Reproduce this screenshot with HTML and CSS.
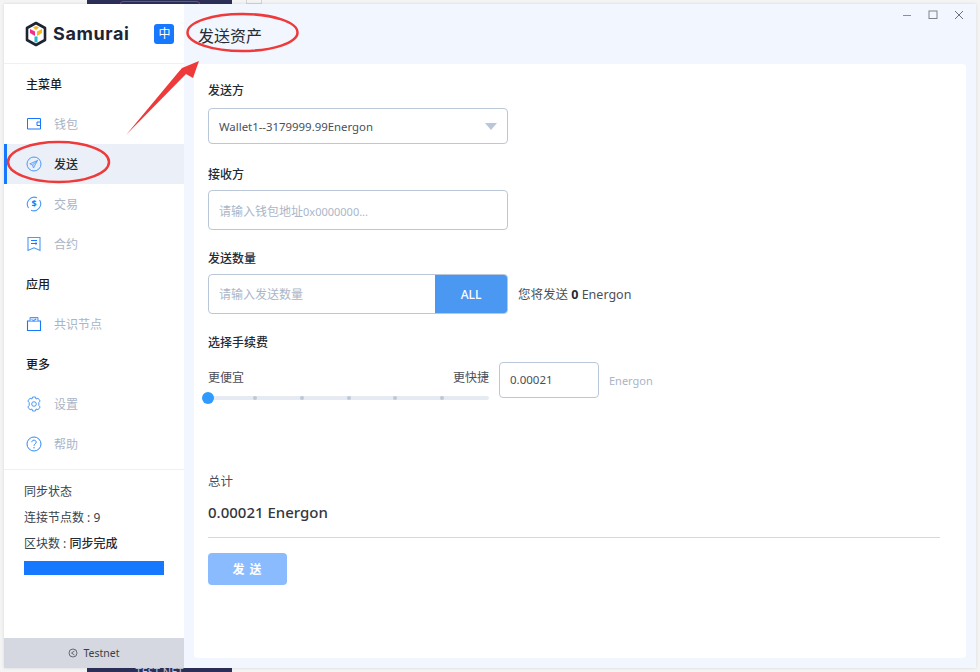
FILE: index.html
```html
<!DOCTYPE html>
<html lang="en">

<head>
    <meta charset="UTF-8">
    <meta name="viewport" content="width=device-width, initial-scale=1.0">
    <title>Samurai</title>
    <link rel="stylesheet" href="styles.css">
</head>

<body>

    <!-- bits of the desktop behind the window -->
    <div class="desk-strip desk-top"><span class="desk-tab"></span></div>
    <div class="desk-box"></div>
    <div class="desk-strip desk-bottom">TEST NET</div>

    <div class="window">
        <aside class="sidebar">
            <div class="brand">
                <svg class="logo" width="22" height="26" viewBox="0 0 22 26">
                    <path d="M11 2 L20 7 V19 L11 24 L2 19 V7 Z" fill="none" stroke="#1f2433" stroke-width="2.6" stroke-linejoin="round"/>
                    <path d="M5 8 L10 10.500 V15 L5 12 Z" fill="#f0308c"/>
                    <path d="M17 8 L12 10.500 V15 L17 12 Z" fill="#f7b818"/>
                    <path d="M8 6.500 L11 5 L14 6.500 L11 9 Z" fill="#f7b818"/>
                    <path d="M9.500 15.500 H12.500 V21 L11 21.500 L9.500 21 Z" fill="#22b8d6"/>
                </svg>
                <span class="brand-name">Samurai</span>
                <span class="lang">中</span>
            </div>

            <div class="menu-title">主菜单</div>
            <a class="menu-item">
                <svg class="icon" viewBox="0 0 16 16"><path d="M1.500 2.500 H14.500 V13 H1.500 Z M14.500 6 H11 V9.500 H14.500" fill="none" stroke="#1677ff" stroke-width="1"/></svg>
                钱包
            </a>
            <a class="menu-item active">
                <svg class="icon" viewBox="0 0 16 16"><circle cx="8" cy="8" r="7" fill="none" stroke="#4a98f7" stroke-width="1"/><path d="M11.500 4.500 L3.800 7.800 L6.500 9 L7.500 12 Z M6.500 9 L11.500 4.500" fill="#cfe2fc" stroke="#4a98f7" stroke-width="0.800" stroke-linejoin="round"/></svg>
                发送
            </a>
            <a class="menu-item">
                <svg class="icon" viewBox="0 0 16 16"><path d="M2.500 12 A7 7 0 0 1 11 1.700 M13.500 4 A7 7 0 0 1 5 14.300" fill="none" stroke="#4a98f7" stroke-width="1.100"/><text x="8" y="11" class="dollar">$</text></svg>
                交易
            </a>
            <a class="menu-item">
                <svg class="icon" viewBox="0 0 16 16"><path d="M2 1.500 H14 V14.500 L8 11.800 L2 14.500 Z" fill="none" stroke="#4a98f7" stroke-width="1.100"/><path d="M5 4.500 H11 M5 7.500 H11 M9.500 6.300 L11 7.500 L9.500 8.700" fill="none" stroke="#1677ff" stroke-width="1"/></svg>
                合约
            </a>

            <div class="menu-title">应用</div>
            <a class="menu-item">
                <svg class="icon" viewBox="0 0 16 16"><path d="M1.500 5 H14.500 V14.500 H1.500 Z" fill="none" stroke="#1677ff" stroke-width="1.100"/><path d="M4 5 V1.500 H12 V5" fill="#cfe2fc" stroke="#4a98f7" stroke-width="1"/><path d="M6 3.500 L7.500 5 L10 2.800" fill="none" stroke="#1677ff" stroke-width="1"/></svg>
                共识节点
            </a>

            <div class="menu-title">更多</div>
            <a class="menu-item">
                <svg class="icon" viewBox="0 0 16 16"><path d="M6.500 1 H9.500 L10 3 L12 2.200 L14.200 5 L12.800 6.500 V9.500 L14.200 11 L12 13.800 L10 13 L9.500 15 H6.500 L6 13 L4 13.800 L1.800 11 L3.200 9.500 V6.500 L1.800 5 L4 2.200 L6 3 Z" fill="none" stroke="#4a98f7" stroke-width="1" stroke-linejoin="round"/><circle cx="8" cy="8" r="2.300" fill="none" stroke="#4a98f7" stroke-width="1"/></svg>
                设置
            </a>
            <a class="menu-item">
                <svg class="icon" viewBox="0 0 16 16"><circle cx="8" cy="8" r="7" fill="none" stroke="#2f88f5" stroke-width="1"/><path d="M5.800 6.200 C5.800 3.500 10.200 3.500 10.200 6.200 C10.200 7.800 8 7.800 8 9.800" fill="none" stroke="#2f88f5" stroke-width="1"/><circle cx="8" cy="11.800" r="0.700" fill="#2f88f5"/></svg>
                帮助
            </a>

            <div class="sync">
                <p>同步状态</p>
                <p>连接节点数 : 9</p>
                <p>区块数 : <span class="sync-done">同步完成</span></p>
                <div class="sync-bar"></div>
            </div>

            <div class="network">
                <svg width="10" height="10" viewBox="0 0 10 10"><circle cx="5" cy="5" r="4" fill="none" stroke="#4a4f5a" stroke-width="0.800"/><path d="M6.500 3 L3.500 5 L6.500 7" fill="none" stroke="#4a4f5a" stroke-width="0.800"/></svg>
                Testnet
            </div>
        </aside>

        <main class="content">
            <header class="topbar">
                <h1>发送资产</h1>
                <div class="win-controls">
                    <svg width="10" height="10" viewBox="0 0 10 10"><path d="M1 5.500 H9" stroke="#8a8f99" stroke-width="1"/></svg>
                    <svg width="10" height="10" viewBox="0 0 10 10"><rect x="1" y="1" width="8" height="7.500" fill="none" stroke="#7d828c" stroke-width="1"/></svg>
                    <svg width="10" height="10" viewBox="0 0 10 10"><path d="M1 1 L9 9 M9 1 L1 9" stroke="#6d727c" stroke-width="1"/></svg>
                </div>
            </header>

            <form class="card">
                <label class="field-label">发送方</label>
                <div class="select">
                    Wallet1--3179999.99Energon
                    <span class="caret"></span>
                </div>

                <label class="field-label label-to">接收方</label>
                <div class="input input-to">请输入钱包地址<span class="hint-latin">0x0000000...</span></div>

                <label class="field-label label-next">发送数量</label>
                <div class="amount-row">
                    <div class="amount-group">
                        <div class="amount-input">请输入发送数量</div>
                        <button type="button" class="all-btn">ALL</button>
                    </div>
                    <span class="amount-note">您将发送 <b>0</b> Energon</span>
                </div>

                <label class="field-label label-next">选择手续费</label>
                <div class="fee-row">
                    <div class="fee-slider">
                        <div class="fee-ends"><span>更便宜</span><span>更快捷</span></div>
                        <div class="track">
                            <i class="dot"></i><i class="dot"></i><i class="dot"></i><i class="dot"></i><i class="dot"></i>
                            <span class="handle"></span>
                        </div>
                    </div>
                    <div class="fee-input">0.00021</div>
                    <span class="fee-unit">Energon</span>
                </div>

                <div class="total-label">总计</div>
                <div class="total-value">0.00021 Energon</div>
                <hr class="divider">
                <button type="button" class="send-btn">发 送</button>
            </form>
        </main>
    </div>

    <!-- red annotation marks drawn on top of the screenshot -->
    <svg class="marks" width="980" height="672" viewBox="0 0 980 672">
        <ellipse cx="242.500" cy="32.500" rx="55" ry="18.500" fill="none" stroke="#ee3a3a" stroke-width="2.500"/>
        <ellipse cx="58.500" cy="162" rx="50.500" ry="20" fill="none" stroke="#ee3a3a" stroke-width="2.500"/>
        <path d="M126 135 L176 75 L182 68 L199 61 L193 78 L186 74 Z" fill="#ee3a3a"/>
    </svg>

</body>

</html>
```

FILE: styles.css
```css
body {
    font-family: "Noto Sans", "Noto Sans CJK SC", sans-serif;
    font-size: 12px;
    margin: 0;
    padding: 4px;
    height: 664px;
    background-color: #f4f4f5;
    overflow: hidden;
}

/* desktop showing round the window */
.desk-strip {
    position: absolute;
    left: 87px;
    width: 145px;
    height: 4px;
    background-color: #2c3058;
    overflow: hidden;
}

.desk-top {
    top: 0;
}

.desk-tab {
    display: block;
    width: 78px;
    height: 6px;
    margin-left: 33px;
    margin-top: 1px;
    border: 1px solid #a03a86;
    border-radius: 3px;
}

.desk-box {
    position: absolute;
    top: 0;
    left: 246px;
    width: 14px;
    height: 3px;
    border: 1px solid #d5d5d8;
    border-top: none;
}

.desk-bottom {
    bottom: 0;
    color: #c5c9dc;
    text-align: center;
    line-height: 8px;
    font-size: 11px;
}

.window {
    position: relative;
    display: flex;
    width: 972px;
    height: 664px;
    background-color: #f2f6fe;
    box-shadow: 0 0 3px rgba(0, 0, 0, 0.12);
}

/* sidebar */
.sidebar {
    width: 180px;
    flex: none;
    display: flex;
    flex-direction: column;
    background-color: #ffffff;
}

.brand {
    display: flex;
    align-items: center;
    height: 59px;
    padding-left: 21px;
    border-bottom: 1px solid #eef0f5;
    box-sizing: content-box;
}

.brand-name {
    margin-left: 6px;
    font-family: "Inter", sans-serif;
    font-size: 18px;
    font-weight: 700;
    letter-spacing: 0.6px;
    color: #1f2433;
}

.lang {
    width: 20px;
    height: 20px;
    margin-left: 25px;
    border-radius: 3px;
    background-color: #1677ff;
    color: #ffffff;
    text-align: center;
    line-height: 20px;
}

.menu-title {
    height: 40px;
    padding-left: 22px;
    line-height: 42px;
    font-weight: 500;
    color: #1c1c1c;
}

.menu-item {
    display: flex;
    align-items: center;
    height: 40px;
    padding-left: 22px;
    color: #a9b4c6;
}

.menu-item.active {
    padding-left: 19px;
    border-left: 3px solid #1677ff;
    background-color: #ebf0f8;
    color: #262a33;
    font-weight: 500;
}

.icon {
    width: 16px;
    height: 16px;
    margin-right: 12px;
}

.dollar {
    font-size: 9px;
    font-weight: 700;
    fill: #1677ff;
    text-anchor: middle;
}

.sync {
    flex: 1;
    margin-top: 5px;
    padding: 9px 20px 0;
    border-top: 1px solid #eef0f5;
    color: #3b3f48;
}

.sync p {
    margin: 0;
    height: 26px;
    line-height: 26px;
}

.sync-done {
    font-weight: 500;
    color: #262a33;
}

.sync-bar {
    height: 14px;
    margin-top: 4px;
    background-color: #1677ff;
}

.network {
    display: flex;
    align-items: center;
    justify-content: center;
    gap: 5px;
    height: 30px;
    background-color: #d5d8e0;
    font-size: 10.500px;
    color: #3b3f48;
}

/* main area */
.content {
    flex: 1;
    display: flex;
    flex-direction: column;
}

.topbar {
    position: relative;
    height: 60px;
    padding-left: 14px;
}

h1 {
    margin: 0;
    font-size: 16px;
    font-weight: 400;
    line-height: 64px;
    color: #262a33;
}

.win-controls {
    position: absolute;
    top: 6px;
    right: 12px;
    display: flex;
    gap: 16px;
}

.card {
    display: flex;
    flex-direction: column;
    align-items: flex-start;
    width: 732px;
    height: 594px;
    padding: 0 26px 0 14px;
    margin-left: 10px;
    background-color: #ffffff;
    border-radius: 4px;
}

.field-label {
    height: 18px;
    margin-top: 18px;
    margin-bottom: 8px;
    line-height: 18px;
    font-weight: 500;
    color: #262a33;
}

.label-to {
    margin-top: 22px;
}

.label-next {
    margin-top: 20px;
}

.select,
.input {
    display: flex;
    align-items: center;
    width: 300px;
    box-sizing: border-box;
    padding-left: 10px;
    border: 1px solid #bac7d8;
    border-radius: 4px;
}

.select {
    position: relative;
    height: 36px;
    font-size: 11.400px;
    color: #4a4f5a;
}

.caret {
    position: absolute;
    right: 10px;
    top: 14px;
    border-left: 6px solid transparent;
    border-right: 6px solid transparent;
    border-top: 7px solid #bac7d8;
}

.input {
    height: 40px;
    padding-top: 2px;
    margin-top: -2px;
    color: #aab6c8;
}

.hint-latin {
    font-size: 11px;
}

.amount-row {
    display: flex;
    align-items: center;
    margin-top: -2px;
}

.amount-group {
    display: flex;
    width: 300px;
    height: 40px;
    box-sizing: border-box;
    border: 1px solid #bac7d8;
    border-radius: 4px;
    overflow: hidden;
}

.amount-input {
    flex: 1;
    padding-left: 10px;
    line-height: 40px;
    color: #aab6c8;
}

.all-btn {
    width: 72px;
    border: none;
    background-color: #4a98f2;
    color: #ffffff;
    font: inherit;
    font-weight: 500;
}

.amount-note {
    margin-left: 10px;
    padding-bottom: 2px;
    font-size: 12.500px;
    color: #4a4f5a;
}

.amount-note b {
    color: #262a33;
}

.fee-row {
    display: flex;
    align-items: flex-start;
    margin-top: 2px;
}

.fee-slider {
    width: 281px;
}

.fee-ends {
    display: flex;
    justify-content: space-between;
    height: 20px;
    line-height: 20px;
    margin-top: 6px;
    color: #4a4f5a;
}

.track {
    position: relative;
    display: flex;
    justify-content: space-between;
    align-items: center;
    height: 4px;
    margin-top: 8px;
    padding: 0 45px 0 45px;
    background-color: #e6eaf2;
    border-radius: 2px;
}

.dot {
    width: 4px;
    height: 4px;
    border-radius: 2px;
    background-color: #bfc8d6;
}

.handle {
    position: absolute;
    left: -6px;
    top: -4px;
    width: 12px;
    height: 12px;
    border-radius: 50%;
    background-color: #2f9bff;
}

.fee-input {
    width: 100px;
    height: 36px;
    box-sizing: border-box;
    margin-left: 10px;
    padding-left: 10px;
    border: 1px solid #bac7d8;
    border-radius: 4px;
    line-height: 34px;
    font-size: 11.500px;
    color: #4a4f5a;
}

.fee-unit {
    align-self: center;
    margin-left: 10px;
    padding-bottom: 2px;
    font-size: 11px;
    color: #a9b4c6;
}

.total-label {
    margin-top: 73px;
    font-size: 12.500px;
    line-height: 18px;
    color: #4a4f5a;
}

.total-value {
    margin-top: 11px;
    font-size: 15px;
    font-weight: 500;
    line-height: 20px;
    color: #333740;
}

.divider {
    width: 100%;
    height: 1px;
    margin: 15px 0 15px;
    border: none;
    background-color: #d5d8e0;
}

.send-btn {
    width: 79px;
    height: 32px;
    border: none;
    border-radius: 4px;
    background-color: #8abbff;
    color: #ffffff;
    font: inherit;
    font-weight: 700;
    letter-spacing: 1px;
}

/* annotations */
.marks {
    position: absolute;
    top: 0;
    left: 0;
    pointer-events: none;
}
```
